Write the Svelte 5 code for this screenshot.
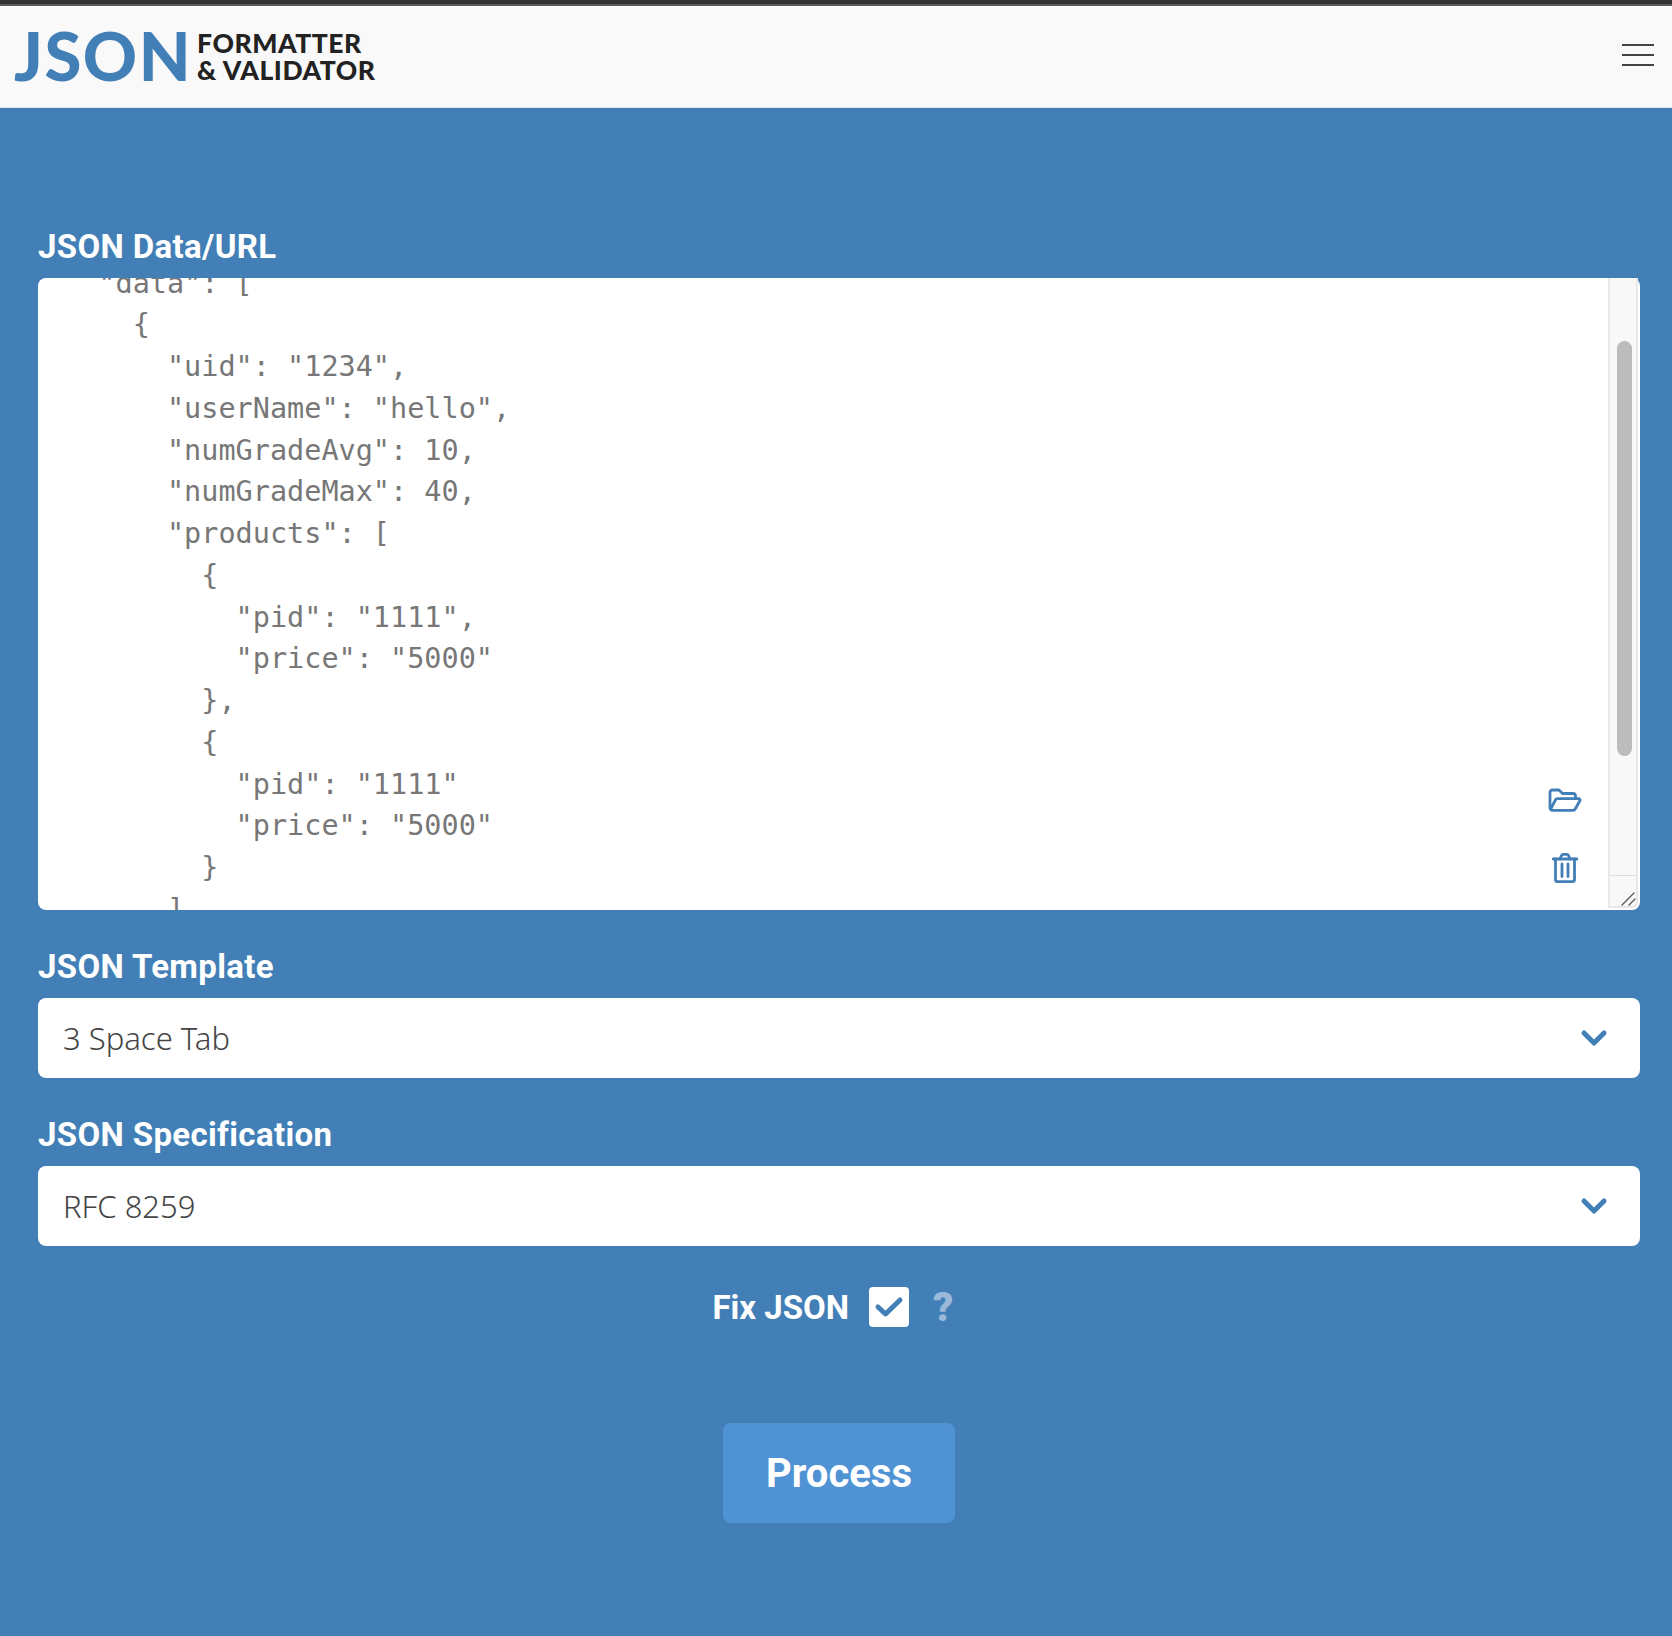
<script>
	import { onMount } from 'svelte';

	let editor;

	const json = `{
  "status": "ok",
  "data": [
    {
      "uid": "1234",
      "userName": "hello",
      "numGradeAvg": 10,
      "numGradeMax": 40,
      "products": [
        {
          "pid": "1111",
          "price": "5000"
        },
        {
          "pid": "1111"
          "price": "5000"
        }
      ]
    }
  ]
}`;

	onMount(() => {
		editor.scrollTop = 115;
	});
</script>

<header class="topbar">
	<a class="logo" href="#top">
		<span class="logo-json">JSON</span>
		<span class="logo-sub">FORMATTER<br />&amp; VALIDATOR</span>
	</a>
	<button class="menu" aria-label="Menu">
		<span></span>
		<span></span>
		<span></span>
	</button>
</header>

<main class="page">
	<label class="field-label" for="data">JSON Data/URL</label>
	<div class="editor-wrap">
		<textarea id="data" class="editor" spellcheck="false" bind:this={editor} value={json}></textarea>
		<div class="scrollbar" aria-hidden="true">
			<div class="track"><div class="thumb"></div></div>
			<div class="corner">
				<svg width="16" height="16" viewBox="0 0 16 16" stroke="#555" stroke-width="1.300" stroke-linecap="round">
					<path d="M2 15L14 3M9 15L15 9" />
				</svg>
			</div>
		</div>
		<button class="tool folder" aria-label="Open file">
			<svg width="34" height="24" viewBox="0 0 34 24" fill="none" stroke="currentColor" stroke-width="2.800" stroke-linejoin="round" stroke-linecap="round">
				<path d="M2 20V4.500C2 3 3 2 4.500 2H11L14.500 5.500H25C26.500 5.500 27.500 6.500 27.500 8V10.500" />
				<path d="M2.500 21.500C3 22 3.500 22.300 4.500 22.300H25C26 22.300 26.800 21.800 27.200 21L32 12.500C32.300 11.500 31.800 10.700 30.800 10.700H9.500C8.500 10.700 7.800 11.100 7.400 12Z" />
			</svg>
		</button>
		<button class="tool trash" aria-label="Clear">
			<svg width="26" height="30" viewBox="0 0 26 30" fill="none" stroke="currentColor" stroke-width="2.800" stroke-linecap="round" stroke-linejoin="round">
				<path d="M1 6H25" />
				<path d="M8 6L9.500 2.500C9.800 1.800 10.300 1.400 11 1.400H15C15.700 1.400 16.200 1.800 16.500 2.500L18 6" />
				<path d="M3.500 6V26.500C3.500 27.800 4.300 28.600 5.500 28.600H20.500C21.700 28.600 22.500 27.800 22.500 26.500V6" />
				<path d="M10 11V23.500M16 11V23.500" />
			</svg>
		</button>
	</div>

	<label class="field-label spaced" for="template">JSON Template</label>
	<div class="select-wrap">
		<select id="template">
			<option>3 Space Tab</option>
			<option>4 Space Tab</option>
			<option>2 Space Tab</option>
		</select>
		<svg class="chevron" width="28" height="20" viewBox="0 0 28 20" fill="none" stroke="currentColor" stroke-width="5" stroke-linecap="round" stroke-linejoin="round">
			<path d="M4 5L14 15L24 5" />
		</svg>
	</div>

	<label class="field-label spaced" for="spec">JSON Specification</label>
	<div class="select-wrap">
		<select id="spec">
			<option>RFC 8259</option>
			<option>RFC 7159</option>
			<option>RFC 4627</option>
		</select>
		<svg class="chevron" width="28" height="20" viewBox="0 0 28 20" fill="none" stroke="currentColor" stroke-width="5" stroke-linecap="round" stroke-linejoin="round">
			<path d="M4 5L14 15L24 5" />
		</svg>
	</div>

	<div class="fix-row">
		<span class="fix-label">Fix JSON</span>
		<span class="checkbox">
			<svg width="30" height="24" viewBox="0 0 30 24" fill="none" stroke="currentColor" stroke-width="5" stroke-linecap="round" stroke-linejoin="round">
				<path d="M4 12L11.500 19L26 5" />
			</svg>
		</span>
		<span class="help">?</span>
	</div>

	<div class="actions">
		<button class="process">Process</button>
	</div>
</main>

<style>
	:global(body) {
		background: #437fb7;
	}

	.topbar {
		height: 103px;
		box-sizing: content-box;
		border-top: 4px solid #333;
		border-bottom: 1px solid #e4e4e4;
		box-shadow: inset 0 2px 0 #5a5a5a;
		background: #f9f9f9;
		display: flex;
		align-items: center;
		justify-content: space-between;
		padding: 0 18px 0 14px;
	}

	.logo {
		display: flex;
		align-items: center;
		gap: 5px;
		text-decoration: none;
	}

	.logo-json {
		font-family: Lato, sans-serif;
		font-weight: 900;
		font-size: 67px;
		letter-spacing: 1.500px;
		line-height: 1;
		color: #437fb7;
	}

	.logo-sub {
		padding-top: 3px;
		font-family: Lato, sans-serif;
		font-weight: 900;
		font-size: 26.500px;
		line-height: 27.500px;
		letter-spacing: 0.550px;
		color: #222;
	}

	.menu {
		width: 32px;
		margin-bottom: 1px;
		padding: 0;
		border: 0;
		background: none;
		display: flex;
		flex-direction: column;
		gap: 8px;
	}

	.menu span {
		height: 2px;
		background: #444;
	}

	.page {
		padding: 117px 32px 113px 38px;
		font-family: Roboto, sans-serif;
	}

	.field-label {
		display: block;
		height: 44px;
		margin-bottom: 9px;
		font-size: 33px;
		font-weight: 700;
		letter-spacing: 0.350px;
		line-height: 44px;
		color: #fff;
	}

	.field-label.spaced {
		margin-top: 35px;
	}

	.editor-wrap {
		position: relative;
		height: 632px;
	}

	.editor {
		display: block;
		box-sizing: border-box;
		width: 100%;
		height: 632px;
		padding: 16px 26px;
		border: 0;
		border-radius: 8px;
		outline: none;
		overflow-y: scroll;
		resize: none;
		background: #fff;
		color: #777;
		font-family: "DejaVu Sans Mono", monospace;
		font-size: 28.500px;
		line-height: 41.750px;
		white-space: pre;
	}

	.scrollbar {
		position: absolute;
		top: 0;
		right: 2px;
		bottom: 2px;
		width: 30px;
		box-sizing: border-box;
		display: flex;
		flex-direction: column;
		border: solid #e8e8e8;
		border-width: 0 2px 2px 2px;
		border-radius: 0 0 6px 0;
		background: #f8f8f8;
	}

	.track {
		flex: 1;
		padding: 63px 4px 0 7px;
	}

	.thumb {
		height: 415px;
		border-radius: 8px;
		background: #bcbcbc;
	}

	.corner {
		height: 30px;
		border-top: 1px solid #ddd;
		display: flex;
		align-items: flex-end;
		justify-content: flex-end;
	}

	.tool {
		position: absolute;
		padding: 0;
		border: 0;
		background: none;
		color: #437fb7;
		display: flex;
	}

	.folder {
		top: 510px;
		right: 58px;
	}

	.trash {
		top: 575px;
		right: 62px;
	}

	.select-wrap {
		position: relative;
	}

	select {
		display: block;
		width: 100%;
		height: 80px;
		padding: 0 25px;
		border: 0;
		border-radius: 8px;
		outline: none;
		appearance: none;
		background: #fff;
		color: #444;
		font-family: "Noto Sans", sans-serif;
		font-size: 31px;
		font-weight: 300;
	}

	.chevron {
		position: absolute;
		top: 30px;
		right: 32px;
		color: #437fb7;
		pointer-events: none;
	}

	.fix-row {
		display: flex;
		align-items: center;
		justify-content: center;
		margin-top: 41px;
		padding-right: 12px;
		height: 40px;
		color: #fff;
	}

	.fix-label {
		font-size: 33px;
		font-weight: 700;
	}

	.checkbox {
		width: 40px;
		height: 40px;
		margin-left: 20px;
		border-radius: 4px;
		background: #fff;
		color: #437fb7;
		display: flex;
		align-items: center;
		justify-content: center;
	}

	.help {
		margin-left: 24px;
		font-size: 40px;
		font-weight: 900;
		color: #9ab9da;
	}

	.actions {
		display: flex;
		justify-content: center;
		margin-top: 96px;
	}

	.process {
		width: 232px;
		height: 100px;
		border: 0;
		border-radius: 8px;
		background: #5093d5;
		color: #fff;
		font-family: Roboto, sans-serif;
		font-size: 40px;
		font-weight: 700;
	}
</style>
